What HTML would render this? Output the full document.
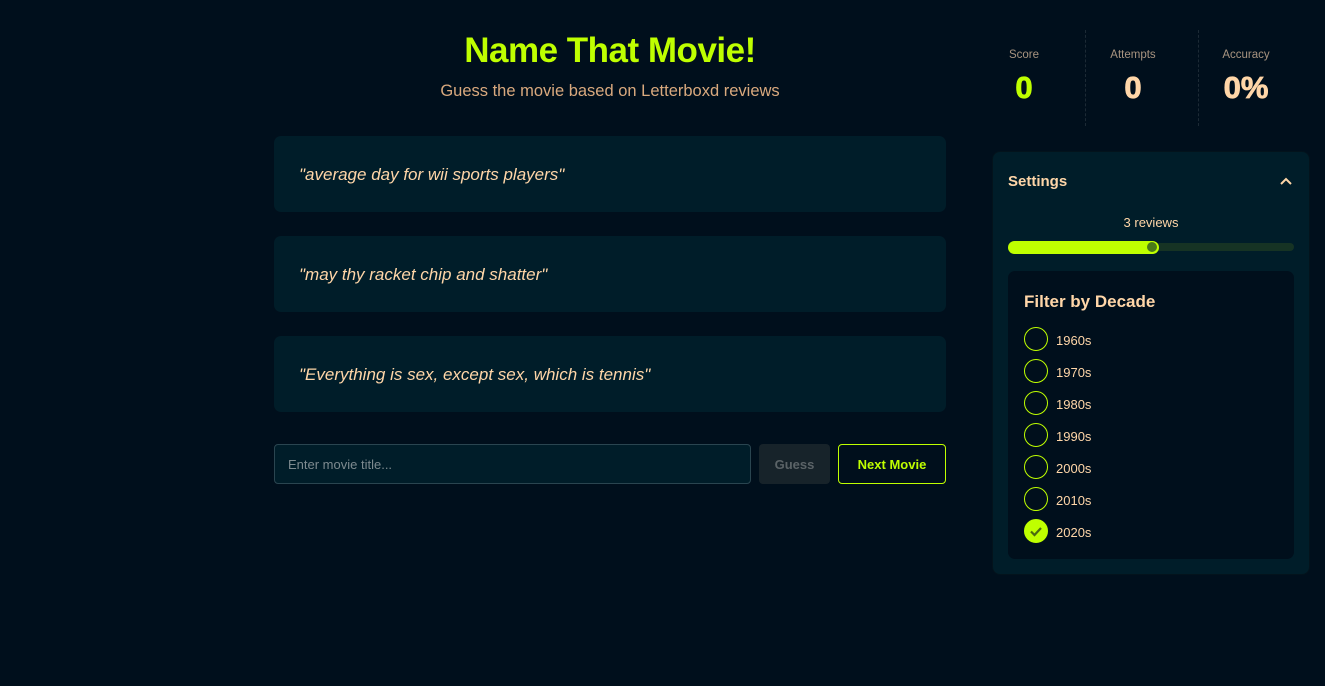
<!DOCTYPE html>
<html><head><meta charset="utf-8"><style>
*{box-sizing:border-box;margin:0;padding:0}
body{width:1325px;height:686px;background:#000f1c;font-family:"Liberation Sans",sans-serif;position:relative;overflow:hidden;color:#ffd6a8}
.abs{position:absolute}
h1{position:absolute;left:274px;width:672px;top:31px;text-align:center;font-size:35px;font-weight:bold;color:#bfff00;letter-spacing:-0.5px}
.sub{left:274px;width:672px;top:82px;text-align:center;font-size:16.5px;color:#d9a97e}
.card{left:274px;width:672px;height:76px;background:#001d29;border-radius:7px;padding-left:25px;line-height:78px;font-style:italic;font-size:17px;color:#ffd6a8}
.input{left:274px;top:444px;width:477px;height:40px;background:#001d29;border:1px solid #2a4550;border-radius:4px;font-size:13px;color:#7d8a8f;padding-left:13px;line-height:40px}
.guess{left:759px;top:444px;width:71px;height:40px;background:#17232a;border-radius:4px;color:#5b6367;font-size:13px;font-weight:bold;text-align:center;line-height:42px}
.next{left:838px;top:444px;width:108px;height:40px;border:1px solid #bfff00;border-radius:4px;color:#bfff00;font-size:13px;font-weight:bold;text-align:center;line-height:40px}
.stat{top:49px;width:110px;text-align:center}
.stat .l{font-size:11.5px;color:#a89480}
.stat .v{font-size:31px;font-weight:900;margin-top:9px;color:#ffd6a8;-webkit-text-stroke:0.8px currentColor}
.div{top:30px;width:0;height:96px;border-left:1px dashed #1c2a35}
.panel{left:992px;top:151px;width:318px;height:424px;background:#001d29;border:1px solid #03131c;border-radius:8px}
.inner{left:1008px;top:271px;width:286px;height:288px;background:#000f1c;border-radius:7px}
.rad{left:1024px;width:24px;height:24px;border:1.5px solid #bfff00;border-radius:50%}
.lab{left:1056px;font-size:13px;color:#ffd6a8}
</style></head><body>
<h1>Name That Movie!</h1>
<div class="abs sub">Guess the movie based on Letterboxd reviews</div>
<div class="abs card" style="top:136px">"average day for wii sports players"</div>
<div class="abs card" style="top:236px">"may thy racket chip and shatter"</div>
<div class="abs card" style="top:336px">"Everything is sex, except sex, which is tennis"</div>
<div class="abs input">Enter movie title...</div>
<div class="abs guess">Guess</div>
<div class="abs next">Next Movie</div>

<div class="abs stat" style="left:969px"><div class="l">Score</div><div class="v" style="color:#bfff00">0</div></div>
<div class="abs div" style="left:1085px"></div>
<div class="abs stat" style="left:1078px"><div class="l">Attempts</div><div class="v">0</div></div>
<div class="abs div" style="left:1198px"></div>
<div class="abs stat" style="left:1191px"><div class="l">Accuracy</div><div class="v">0%</div></div>

<div class="abs panel"></div>
<div class="abs" style="left:1008px;top:173px;font-size:15px;font-weight:bold">Settings</div>
<svg class="abs" style="left:1279px;top:176px" width="14" height="10"><path d="M2 8 L7 3 L12 8" stroke="#ffd6a8" stroke-width="2" fill="none"/></svg>
<div class="abs" style="left:1008px;width:286px;top:215px;text-align:center;font-size:13px">3 reviews</div>
<div class="abs" style="left:1008px;top:243px;width:286px;height:8px;background:#163324;border-radius:4px"></div>
<div class="abs" style="left:1008px;top:241px;width:151px;height:13px;background:#bfff00;border-radius:7px"></div>
<div class="abs" style="left:1147px;top:242px;width:10px;height:10px;background:#4b7a18;border-radius:50%"></div>
<div class="abs inner"></div>
<div class="abs" style="left:1024px;top:292px;font-size:17px;font-weight:bold">Filter by Decade</div>
<div class="abs rad" style="top:327px"></div><div class="abs lab" style="top:333px">1960s</div>
<div class="abs rad" style="top:359px"></div><div class="abs lab" style="top:365px">1970s</div>
<div class="abs rad" style="top:391px"></div><div class="abs lab" style="top:397px">1980s</div>
<div class="abs rad" style="top:423px"></div><div class="abs lab" style="top:429px">1990s</div>
<div class="abs rad" style="top:455px"></div><div class="abs lab" style="top:461px">2000s</div>
<div class="abs rad" style="top:487px"></div><div class="abs lab" style="top:493px">2010s</div>
<div class="abs rad" style="top:519px;background:#bfff00"></div>
<svg class="abs" style="left:1024px;top:519px" width="24" height="24"><path d="M7 12.5 L10.5 16 L17 9" stroke="#4b6a10" stroke-width="2.2" fill="none"/></svg>
<div class="abs lab" style="top:525px">2020s</div>
</body></html>
